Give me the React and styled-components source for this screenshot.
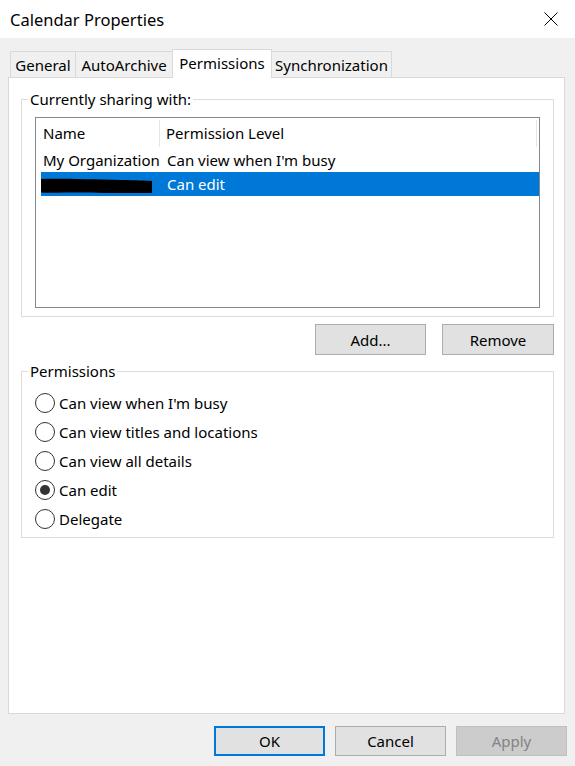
import React from 'react';
import styled, { createGlobalStyle } from 'styled-components';

const GlobalStyle = createGlobalStyle`
  html, body {
    margin: 0;
    padding: 0;
  }
  body {
    background: #f0f0f0;
    font-family: "Noto Sans", "Segoe UI", sans-serif;
    font-size: 15px;
    color: #000;
  }
`;

const Dialog = styled.div`
  width: 575px;
  height: 766px;
  display: flex;
  flex-direction: column;
  background: #f0f0f0;
  overflow: hidden;
`;

const TitleBar = styled.div`
  flex: none;
  height: 38px;
  background: #fff;
  display: flex;
  align-items: center;
  justify-content: space-between;
  padding: 0 17px 0 10px;
`;

const Title = styled.span`
  font-size: 16.5px;
`;

const Body = styled.div`
  flex: 1;
  display: flex;
  flex-direction: column;
  padding: 11px 10px 0 8px;
`;

const TabStrip = styled.div`
  display: flex;
  align-items: flex-end;
  height: 28px;
  padding-left: 2px;
  position: relative;
  z-index: 1;
`;

const Tab = styled.div`
  box-sizing: border-box;
  width: ${(p) => p.$w}px;
  height: ${(p) => (p.$active ? 29 : 26)}px;
  margin-bottom: ${(p) => (p.$active ? -1 : 0)}px;
  margin-left: -1px;
  display: flex;
  align-items: center;
  justify-content: center;
  background: ${(p) => (p.$active ? '#fff' : '#f0f0f0')};
  border: 1px solid #d9d9d9;
  border-bottom: none;
  padding-bottom: ${(p) => (p.$active ? 3 : 0)}px;
  position: relative;
  z-index: ${(p) => (p.$active ? 2 : 1)};

  &:first-child {
    margin-left: 0;
  }
`;

const Panel = styled.div`
  box-sizing: border-box;
  width: 557px;
  height: 637px;
  background: #fff;
  border: 1px solid #d9d9d9;
  display: flex;
  flex-direction: column;
  padding: 13px 10px 0 12px;
`;

const Group = styled.fieldset`
  margin: 0;
  min-width: 0;
  border: 1px solid #dcdcdc;
  padding: 10px 13px ${(p) => p.$bottom}px 13px;
`;

const Legend = styled.legend`
  margin-left: -7px;
  padding: 0 2px;
  line-height: 16px;
`;

const ListView = styled.div`
  box-sizing: border-box;
  height: 191px;
  border: 1px solid #828790;
  background: #fff;
`;

const ListHeader = styled.div`
  height: 30px;
  display: grid;
  grid-template-columns: 124px 377px;
  align-items: center;
`;

const HeaderCell = styled.div`
  height: 27px;
  display: flex;
  align-items: center;
  padding-left: ${(p) => p.$pad}px;
  border-right: 1px solid #e5e5e5;
`;

const ListBody = styled.div`
  padding-left: 5px;
`;

const ListRow = styled.div`
  height: 24px;
  display: grid;
  grid-template-columns: 119px 1fr;
  align-items: center;
  background: ${(p) => (p.$selected ? '#0078d7' : 'transparent')};
  color: ${(p) => (p.$selected ? '#fff' : '#000')};
`;

const Cell = styled.div`
  display: flex;
  align-items: center;
  padding-left: ${(p) => p.$pad}px;
  white-space: nowrap;
`;

const ButtonRow = styled.div`
  display: flex;
  justify-content: flex-end;
  gap: 16px;
  margin-top: 7px;
`;

const Button = styled.button`
  box-sizing: border-box;
  width: ${(p) => p.$w || 111}px;
  height: ${(p) => p.$h || 31}px;
  font: inherit;
  font-size: 15px;
  padding: 0;
  background: ${(p) => (p.$disabled ? '#cccccc' : '#e1e1e1')};
  color: ${(p) => (p.$disabled ? '#838383' : '#000')};
  border: ${(p) =>
    p.$default ? '2px solid #0078d7' : p.$disabled ? '1px solid #bfbfbf' : '1px solid #adadad'};
`;

const PermGroup = styled(Group)`
  margin-top: 8px;
  padding-top: 9px;
`;

const RadioRow = styled.label`
  height: 29px;
  display: flex;
  align-items: center;
  gap: 4px;
`;

const RadioCircle = styled.span`
  box-sizing: border-box;
  width: 20px;
  height: 20px;
  border: 1px solid #333;
  border-radius: 50%;
  background: #fff;
  display: flex;
  align-items: center;
  justify-content: center;

  &::after {
    content: '';
    width: 10px;
    height: 10px;
    border-radius: 50%;
    background: ${(p) => (p.$checked ? '#333' : 'transparent')};
  }
`;

const Footer = styled.div`
  display: flex;
  justify-content: flex-end;
  gap: 10px;
  margin: 12px -2px 0 0;
`;

const CloseIcon = () => (
  <svg width="14" height="14" viewBox="0 0 14 14">
    <path d="M0.5 0.5 L13.5 13.5 M13.5 0.5 L0.5 13.5" stroke="#000" strokeWidth="1" fill="none" />
  </svg>
);

// marker scribble over the hidden name
const Redacted = () => (
  <svg width="112" height="16" viewBox="0 0 112 16" style={{ marginTop: 3 }}>
    <path
      d="M0 1 C20 0.5 50 1.5 80 2 C95 2.3 105 2.5 111 3 L111 15 C95 14.8 70 15.5 50 14.6 C30 14.2 12 15 0 14.5 Z"
      fill="#000"
    />
  </svg>
);

const tabs = [
  { label: 'General', w: 66 },
  { label: 'AutoArchive', w: 98 },
  { label: 'Permissions', w: 100, active: true },
  { label: 'Synchronization', w: 121 },
];

const levels = [
  "Can view when I'm busy",
  'Can view titles and locations',
  'Can view all details',
  'Can edit',
  'Delegate',
];

export default function App() {
  return (
    <>
      <GlobalStyle />
      <Dialog>
        <TitleBar>
          <Title>Calendar Properties</Title>
          <CloseIcon />
        </TitleBar>
        <Body>
          <TabStrip>
            {tabs.map((t) => (
              <Tab key={t.label} $w={t.w} $active={t.active}>
                {t.label}
              </Tab>
            ))}
          </TabStrip>
          <Panel>
            <Group $bottom={8}>
              <Legend>Currently sharing with:</Legend>
              <ListView>
                <ListHeader>
                  <HeaderCell $pad={7}>Name</HeaderCell>
                  <HeaderCell $pad={6}>Permission Level</HeaderCell>
                </ListHeader>
                <ListBody>
                  <ListRow>
                    <Cell $pad={2}>My Organization</Cell>
                    <Cell $pad={7}>Can view when I'm busy</Cell>
                  </ListRow>
                  <ListRow $selected>
                    <Cell $pad={0}>
                      <Redacted />
                    </Cell>
                    <Cell $pad={7}>Can edit</Cell>
                  </ListRow>
                </ListBody>
              </ListView>
            </Group>
            <ButtonRow>
              <Button>Add...</Button>
              <Button $w={112}>Remove</Button>
            </ButtonRow>
            <PermGroup $bottom={4}>
              <Legend>Permissions</Legend>
              {levels.map((l) => (
                <RadioRow key={l}>
                  <RadioCircle $checked={l === 'Can edit'} />
                  {l}
                </RadioRow>
              ))}
            </PermGroup>
          </Panel>
          <Footer>
            <Button $h={30} $default>OK</Button>
            <Button $h={30}>Cancel</Button>
            <Button $h={30} $disabled>Apply</Button>
          </Footer>
        </Body>
      </Dialog>
    </>
  );
}
